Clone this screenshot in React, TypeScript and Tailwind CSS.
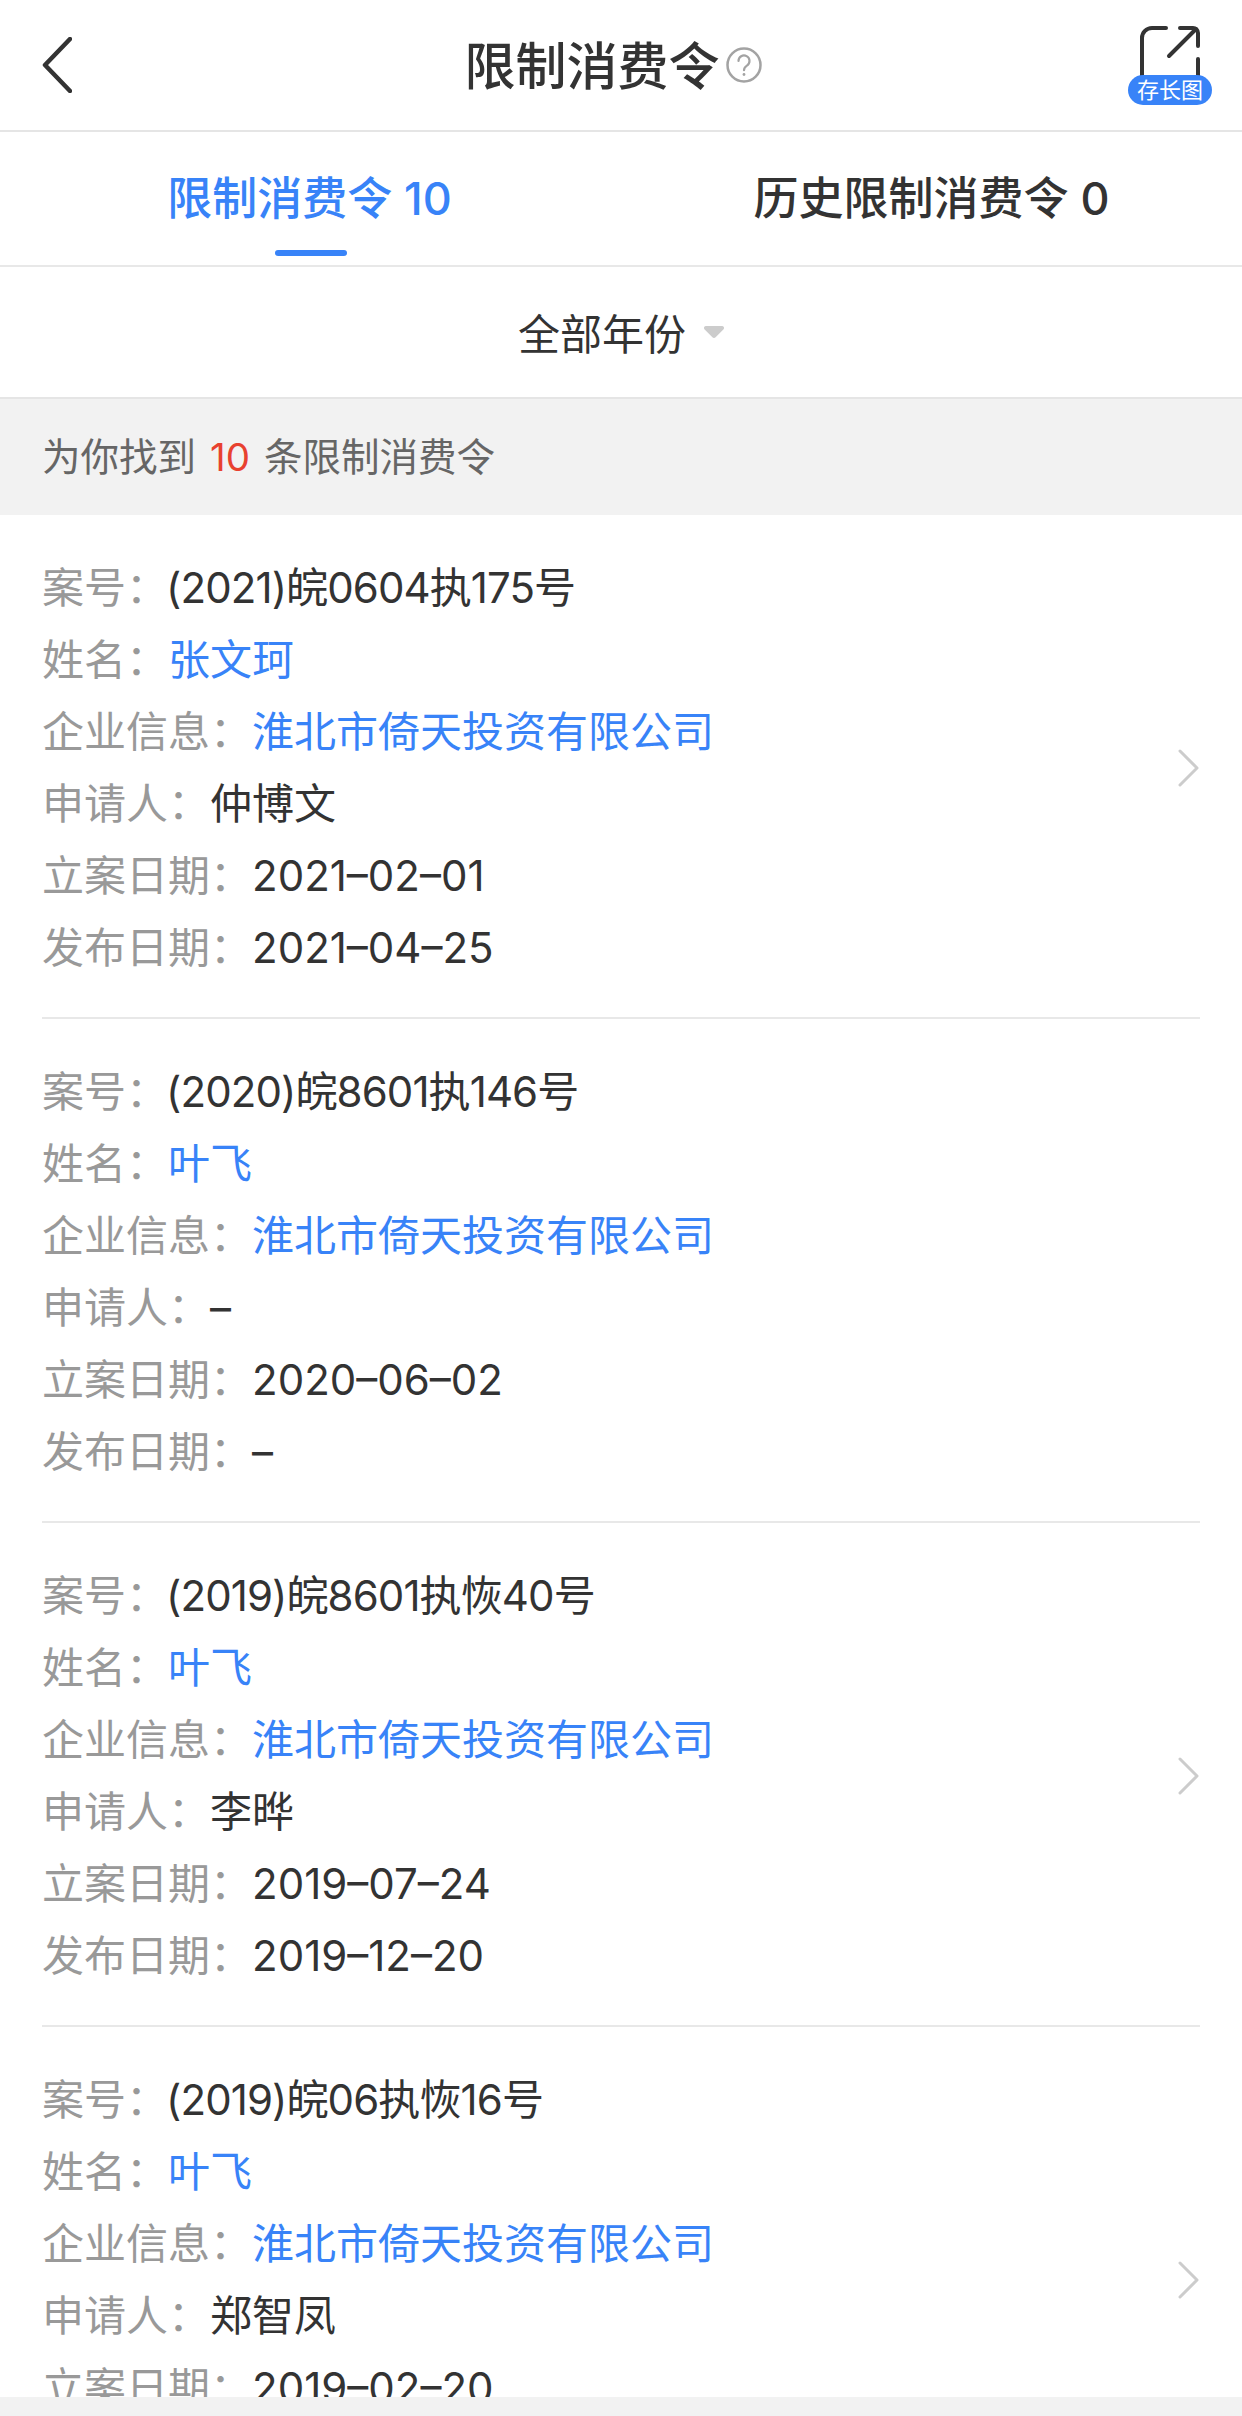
const FONT = "font-['Inter','Noto_Sans_CJK_SC',sans-serif]";

type Order = {
  caseNo: string;
  name: string;
  applicant: string;
  filed: string;
  published: string;
  arrow: boolean;
};

const orders: Order[] = [
  { caseNo: "(2021)皖0604执175号", name: "张文珂", applicant: "仲博文", filed: "2021–02–01", published: "2021–04–25", arrow: true },
  { caseNo: "(2020)皖8601执146号", name: "叶飞", applicant: "–", filed: "2020–06–02", published: "–", arrow: false },
  { caseNo: "(2019)皖8601执恢40号", name: "叶飞", applicant: "李晔", filed: "2019–07–24", published: "2019–12–20", arrow: true },
  { caseNo: "(2019)皖06执恢16号", name: "叶飞", applicant: "郑智凤", filed: "2019–02–20", published: "2019–01–11", arrow: true },
];

const Row = ({ label, value, link, tight }: { label: string; value: string; link?: boolean; tight?: boolean }) => (
  <div className="flex h-[72px] items-center whitespace-nowrap text-[42px] leading-[72px]">
    <span className="text-[#999999]">{label}：</span>
    <span className={link ? "text-[#3883f8]" : tight ? "ml-[-2px] tracking-[-0.9px] text-[#333333]" : "text-[#333333]"}>{value}</span>
  </div>
);

const OrderCard = ({ order }: { order: Order }) => (
  <div className="mx-[42px] flex h-[504px] shrink-0 items-center justify-between border-b-2 border-[#e8e8e8] pb-[34px] pt-[38px]">
    <div className="flex flex-col">
      <Row label="案号" value={order.caseNo} tight />
      <Row label="姓名" value={order.name} link />
      <Row label="企业信息" value="淮北市倚天投资有限公司" link />
      <Row label="申请人" value={order.applicant} />
      <Row label="立案日期" value={order.filed} />
      <Row label="发布日期" value={order.published} />
    </div>
    {order.arrow && (
      <svg width="22" height="38" viewBox="0 0 22 38" fill="none" stroke="#cccccc" strokeWidth="3" strokeLinecap="round" strokeLinejoin="round">
        <path d="M2 2l17 17L2 36" />
      </svg>
    )}
  </div>
);

export default function App() {
  return (
    <div className={`flex h-[2416px] w-[1242px] flex-col overflow-hidden bg-white ${FONT}`}>
      {/* nav */}
      <div className="grid h-[132px] shrink-0 grid-cols-[1fr_auto_1fr] items-center border-b-2 border-[#e5e5e5] px-[42px]">
        <svg width="30" height="56" viewBox="0 0 30 56" fill="none" stroke="#333333" strokeWidth="4.5" strokeLinecap="round" strokeLinejoin="round">
          <path d="M28 2L3 28l25 26" />
        </svg>
        <div className="mr-[16px] flex items-center gap-[6px]">
          <span className="pt-[3px] text-[51px] font-medium leading-none text-[#333333]">限制消费令</span>
          <svg width="36" height="36" viewBox="0 0 36 36" fill="none" stroke="#a3a3a3">
            <circle cx="18" cy="18" r="16.5" strokeWidth="2.5" />
            <path d="M12.5 14a5.5 5.5 0 1 1 8.4 4.6c-1.9 1.2-2.9 2.2-2.9 4.6" strokeWidth="2.2" strokeLinecap="round" />
            <circle cx="18" cy="27.5" r="1.4" fill="#a3a3a3" stroke="none" />
          </svg>
        </div>
        <div className="relative h-[79px] w-[60px] justify-self-end">
          <svg width="60" height="50" viewBox="0 0 60 50" fill="none" stroke="#333333" strokeWidth="4" strokeLinecap="round" strokeLinejoin="round">
            <path d="M26 2H12a10 10 0 0 0-10 10v38" />
            <path d="M58 33v17" />
            <path d="M29 30L56 3" />
            <path d="M40 2h13a5 5 0 0 1 5 5v13" />
          </svg>
          <div className="absolute left-[-12px] top-[49px] flex h-[30px] w-[84px] items-center justify-center rounded-full bg-[#3883f8] text-[22px] leading-none text-white">
            存长图
          </div>
        </div>
      </div>

      {/* tabs */}
      <div className="grid h-[135px] shrink-0 grid-cols-2 border-b-2 border-[#e8e8e8]">
        <div className="flex flex-col items-center">
          <span className="mr-[2px] mt-[41px] text-[45px] font-medium leading-[52px] text-[#3883f8]">限制消费令 10</span>
          <span className="mt-[25px] h-[6px] w-[72px] rounded-full bg-[#3883f8]" />
        </div>
        <div className="flex flex-col items-center">
          <span className="mt-[41px] text-[45px] font-medium leading-[52px] text-[#333333]">历史限制消费令 0</span>
        </div>
      </div>

      {/* year filter */}
      <div className="flex h-[132px] shrink-0 items-center justify-center gap-[18px] border-b-2 border-[#e5e5e5]">
        <span className="pt-[5px] text-[42px] leading-none text-[#333333]">全部年份</span>
        <svg width="20" height="12" viewBox="0 0 20 12" fill="#cccccc">
          <path d="M2 0h16a2 2 0 0 1 1.6 3.2l-8 8a2 2 0 0 1-3.2 0l-8-8A2 2 0 0 1 2 0z" />
        </svg>
      </div>

      {/* count */}
      <div className="flex h-[116px] shrink-0 items-center bg-[#f2f2f2] px-[42px] text-[38.5px] leading-none text-[#666666]">
        为你找到<span className="mx-[14px] text-[#e8412f]">10</span>条限制消费令
      </div>

      {/* list */}
      <div className="flex min-h-0 flex-1 flex-col overflow-hidden">
        {orders.map((order) => (
          <OrderCard key={order.caseNo} order={order} />
        ))}
      </div>

      <div className="h-[19px] shrink-0 bg-[#f2f2f2]" />
    </div>
  );
}
